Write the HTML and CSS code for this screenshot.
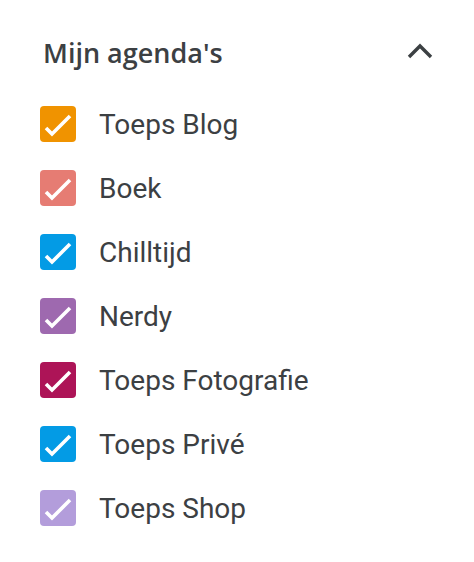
FILE: index.html
```html
<!DOCTYPE html>
<html lang="nl">
<head>
  <meta charset="UTF-8">
  <meta name="viewport" content="width=device-width, initial-scale=1.0">
  <title>Mijn agenda's</title>
  <link rel="stylesheet" href="styles.css">
</head>
<body>
  <div class="panel">
    <div class="panel-header">
      <h2>Mijn agenda's</h2>
      <svg class="chevron" width="28" height="28" viewBox="0 0 28 28">
        <path d="M3 19 L14 8 L25 19" fill="none" stroke="#3c4043" stroke-width="3.4"/>
      </svg>
    </div>

    <ul class="calendar-list">
      <li><svg class="check orange" viewBox="0 0 36 36"><path d="M6 22 L12 28 L30 10"/></svg>Toeps Blog</li>
      <li><svg class="check salmon" viewBox="0 0 36 36"><path d="M6 22 L12 28 L30 10"/></svg>Boek</li>
      <li><svg class="check blue" viewBox="0 0 36 36"><path d="M6 22 L12 28 L30 10"/></svg>Chilltijd</li>
      <li><svg class="check purple" viewBox="0 0 36 36"><path d="M6 22 L12 28 L30 10"/></svg>Nerdy</li>
      <li><svg class="check berry" viewBox="0 0 36 36"><path d="M6 22 L12 28 L30 10"/></svg>Toeps Fotografie</li>
      <li><svg class="check blue" viewBox="0 0 36 36"><path d="M6 22 L12 28 L30 10"/></svg>Toeps Privé</li>
      <li><svg class="check lavender" viewBox="0 0 36 36"><path d="M6 22 L12 28 L30 10"/></svg>Toeps Shop</li>
    </ul>
  </div>
</body>
</html>
```

FILE: styles.css
```css
body {
  font-family: Roboto, "Noto Sans", sans-serif;
  background: #fff;
  color: #3c4043;
  margin: 0;
}

.panel {
  padding: 30px 30px 0 40px;
}

.panel-header {
  display: flex;
  align-items: center;
  justify-content: space-between;
  height: 44px;
  padding-left: 3px;
}

.panel-header h2 {
  margin: 0;
  font-family: "Open Sans", Roboto, sans-serif;
  font-size: 27px;
  font-weight: 600;
  color: #3c4043;
}

.chevron {
  margin-right: 10px;
}

.calendar-list {
  list-style: none;
  margin: 0;
  padding: 18px 0 0;
}

.calendar-list li {
  display: flex;
  align-items: center;
  gap: 23px;
  height: 64px;
  font-size: 28px;
}

.check {
  width: 36px;
  height: 36px;
  border-radius: 4px;
  flex-shrink: 0;
}

.check path {
  fill: none;
  stroke: #fff;
  stroke-width: 3.6;
}

.orange { background-color: #f09300; }
.salmon { background-color: #e67c73; }
.blue { background-color: #039be5; }
.purple { background-color: #9e69af; }
.berry { background-color: #ad1457; }
.lavender { background-color: #b39ddb; }
```
